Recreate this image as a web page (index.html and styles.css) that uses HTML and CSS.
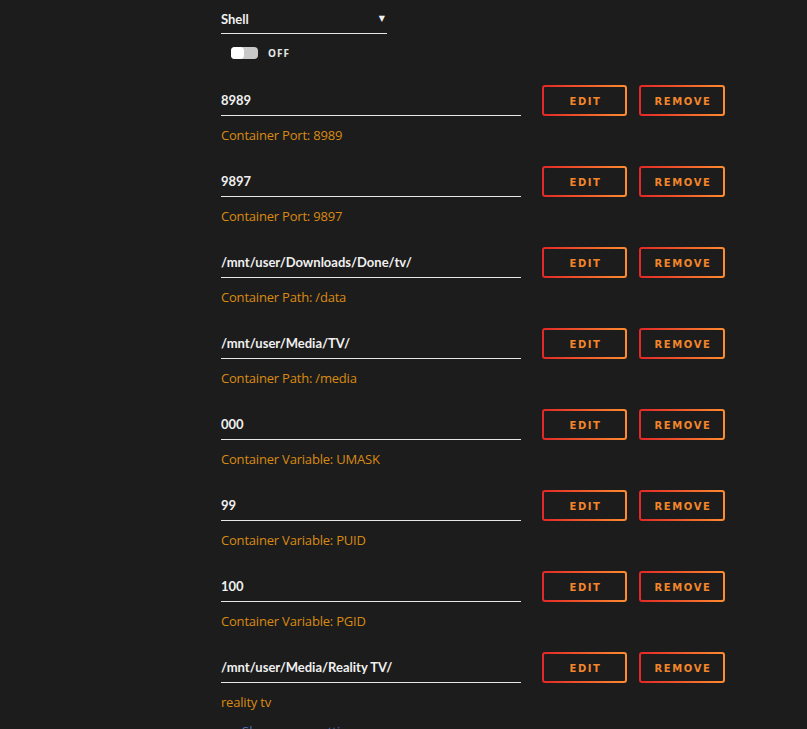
FILE: index.html
```html
<!DOCTYPE html>
<html>
  <head>
    <title>Container settings</title>
    <link rel="stylesheet" href="styles.css">
  </head>
  <body>
    <div class="settings">
      <div class="select">
        <span>Shell</span>
        <span class="arrow">&#9660;</span>
      </div>
      <div class="switch">
        <span class="track"><span class="knob"></span></span>
        <span class="switch-label">OFF</span>
      </div>

      <div class="entry">
        <div class="line">
          <div class="value">8989</div>
          <button class="btn">EDIT</button>
          <button class="btn">REMOVE</button>
        </div>
        <div class="desc">Container Port: 8989</div>
      </div>

      <div class="entry">
        <div class="line">
          <div class="value">9897</div>
          <button class="btn">EDIT</button>
          <button class="btn">REMOVE</button>
        </div>
        <div class="desc">Container Port: 9897</div>
      </div>

      <div class="entry">
        <div class="line">
          <div class="value">/mnt/user/Downloads/Done/tv/</div>
          <button class="btn">EDIT</button>
          <button class="btn">REMOVE</button>
        </div>
        <div class="desc">Container Path: /data</div>
      </div>

      <div class="entry">
        <div class="line">
          <div class="value">/mnt/user/Media/TV/</div>
          <button class="btn">EDIT</button>
          <button class="btn">REMOVE</button>
        </div>
        <div class="desc">Container Path: /media</div>
      </div>

      <div class="entry">
        <div class="line">
          <div class="value">000</div>
          <button class="btn">EDIT</button>
          <button class="btn">REMOVE</button>
        </div>
        <div class="desc">Container Variable: UMASK</div>
      </div>

      <div class="entry">
        <div class="line">
          <div class="value">99</div>
          <button class="btn">EDIT</button>
          <button class="btn">REMOVE</button>
        </div>
        <div class="desc">Container Variable: PUID</div>
      </div>

      <div class="entry">
        <div class="line">
          <div class="value">100</div>
          <button class="btn">EDIT</button>
          <button class="btn">REMOVE</button>
        </div>
        <div class="desc">Container Variable: PGID</div>
      </div>

      <div class="entry">
        <div class="line">
          <div class="value">/mnt/user/Media/Reality TV/</div>
          <button class="btn">EDIT</button>
          <button class="btn">REMOVE</button>
        </div>
        <div class="desc">reality tv</div>
      </div>

      <div class="more">Show more settings ...</div>
    </div>
  </body>
</html>
```

FILE: styles.css
```css
/* container settings */
html, body {
  margin: 0;
  background-color: #1c1c1c;
  height: 100%;
  overflow: hidden;
}
.settings {
  padding-left: 221px;
  font-family: "Open Sans", "DejaVu Sans", sans-serif;
  font-size: 13px;
  color: #f0f0f0;
}
.select {
  width: 166px;
  display: flex;
  justify-content: space-between;
  align-items: center;
  padding-top: 10px;
  padding-bottom: 5px;
  line-height: 18px;
  border-bottom: 1px solid #e6e6e6;
  font-family: Lato, "Open Sans", sans-serif;
  font-weight: 700;
}
.arrow {
  font-family: "DejaVu Sans", sans-serif;
  font-size: 8px;
  margin-right: 2px;
}
.switch {
  display: flex;
  align-items: center;
  margin-top: 13px;
  margin-left: 10px;
  height: 12px;
  margin-bottom: 26px;
}
.track {
  width: 27px;
  height: 12px;
  border-radius: 4px;
  background-color: #c8c8c8;
  display: flex;
}
.knob {
  width: 13px;
  height: 12px;
  border-radius: 4px;
  background-color: #fff;
}
.switch-label {
  margin-left: 10px;
  font-size: 10px;
  font-weight: 700;
  letter-spacing: 1px;
  color: #e8e8e8;
}
.entry {
  height: 81px;
}
.line {
  display: flex;
  align-items: flex-end;
  height: 31px;
}
.value {
  width: 300px;
  margin-right: 21px;
  border-bottom: 1px solid #e6e6e6;
  line-height: 18px;
  padding-bottom: 6px;
  font-family: Lato, "Open Sans", sans-serif;
  font-weight: 700;
}
.btn {
  height: 31px;
  width: 85px;
  margin: 0;
  margin-right: 12px;
  border: 2px solid transparent;
  border-radius: 3px;
  background: linear-gradient(#1c1c1c, #1c1c1c) padding-box,
              linear-gradient(90deg, #e22828, #ff8c2f) border-box;
  color: #f3862a;
  font-family: "DejaVu Sans", sans-serif;
  font-size: 10px;
  font-weight: 700;
  letter-spacing: 1.6px;
  padding: 1px 0 0 2px;
}
.btn + .btn {
  width: 86px;
}
.desc {
  margin-top: 10px;
  line-height: 18px;
  letter-spacing: -0.2px;
  color: #d98a12;
}
.more {
  margin-left: 21px;
  margin-top: -11px;
  color: #4a6fb8;
  line-height: 18px;
}
```
